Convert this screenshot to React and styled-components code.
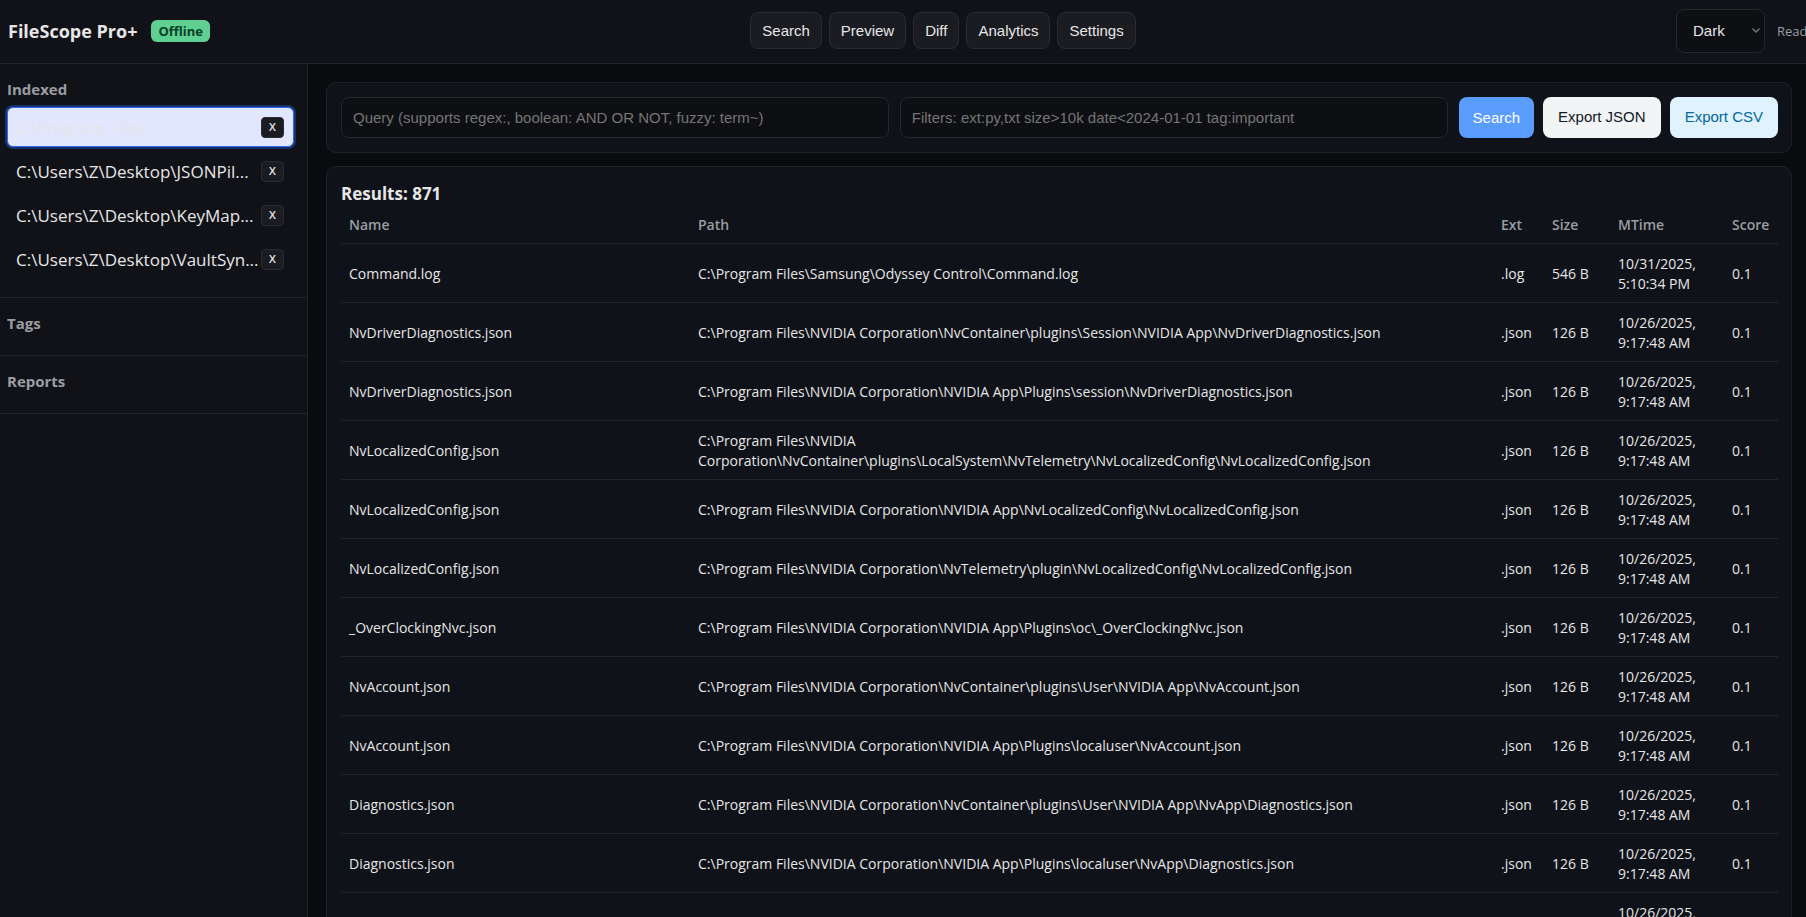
import React from "react";
import styled, { createGlobalStyle } from "styled-components";

const uiFont = `"Segoe UI", "Open Sans", "Noto Sans", sans-serif`;
const controlFont = `Arial, "Liberation Sans", sans-serif`;

const GlobalStyle = createGlobalStyle`
  *, *::before, *::after { box-sizing: border-box; }
  html, body, #root { height: 100%; }
  body {
    margin: 0;
    overflow: hidden;
    background: #0a0b0e;
    color: #e6e6e6;
    font-family: ${uiFont};
    font-size: 16px;
  }
`;

const Shell = styled.div`
  display: flex;
  flex-direction: column;
  height: 100%;
`;

const TopBar = styled.header`
  display: flex;
  align-items: center;
  justify-content: space-between;
  height: 64px;
  flex: none;
  padding: 0 8px 2px;
  background: #111217;
  border-bottom: 1px solid #222326;
`;

const Brand = styled.div`
  display: flex;
  align-items: center;
  gap: 14px;
  white-space: nowrap;
`;

const BrandName = styled.h1`
  margin: 0;
  font-size: 18px;
  font-weight: 700;
  line-height: 24px;
`;

const StatusBadge = styled.span`
  padding: 2px 7px;
  border-radius: 6px;
  background: #5fd092;
  color: #064024;
  font-size: 13px;
  font-weight: 700;
  line-height: 18px;
`;

const Tabs = styled.nav`
  display: flex;
  gap: 7px;
`;

const TabButton = styled.button`
  height: 37px;
  padding: 0 11px;
  border: 1px solid #2a2b32;
  border-radius: 8px;
  background: #1b1c21;
  color: #e6e6e6;
  font-family: ${controlFont};
  font-size: 15px;
`;

const TopRight = styled.div`
  display: flex;
  align-items: center;
  gap: 12px;
  margin-right: -16px;
`;

const ThemePicker = styled.label`
  display: grid;
  align-items: center;

  & > * { grid-area: 1 / 1; }
`;

const ThemeSelect = styled.select`
  appearance: none;
  width: 89px;
  height: 44px;
  padding: 0 16px;
  border: 1px solid #26272e;
  border-radius: 8px;
  background: #0e0f13;
  color: #e6e6e6;
  font-family: ${controlFont};
  font-size: 15px;
`;

const Chevron = styled.svg`
  justify-self: end;
  width: 8px;
  height: 5px;
  margin-right: 5px;
  pointer-events: none;
`;

const StatusText = styled.span`
  color: #9a9da1;
  font-size: 13px;
`;

const Body = styled.div`
  display: flex;
  flex: 1;
  min-height: 0;
`;

const Sidebar = styled.aside`
  width: 308px;
  flex: none;
  background: #111217;
  border-right: 1px solid #222326;
`;

const SideSection = styled.section`
  padding: 15px 13px 14px 7px;
  border-bottom: 1px solid #222326;
`;

const SideTitle = styled.h2`
  margin: 0 0 8px;
  color: #9a9da1;
  font-size: 15px;
  font-weight: 700;
  line-height: 20px;
`;

const IndexList = styled.ul`
  display: flex;
  flex-direction: column;
  gap: 4px;
  margin: 0;
  padding: 0 0 4px;
  list-style: none;
`;

const IndexItem = styled.li`
  display: flex;
  align-items: center;
  justify-content: space-between;
  height: 40px;
  padding: 0 9px 0 8px;
  border: 1px solid ${(p) => (p.$active ? "#2f6bea" : "transparent")};
  border-radius: 6px;
  background: ${(p) => (p.$active ? "#e0e7ff" : "transparent")};
  box-shadow: ${(p) => (p.$active ? "0 0 0 2px #17326b" : "none")};
`;

const IndexPath = styled.span`
  font-size: 17px;
  white-space: nowrap;
`;

const RemoveButton = styled.button`
  width: 23px;
  height: 21px;
  padding: 0;
  flex: none;
  border: 1px solid #2a2b32;
  border-radius: 4px;
  background: #1b1c21;
  color: #e6e6e6;
  font-family: ${uiFont};
  font-size: 11px;
  font-weight: 600;
  line-height: 18px;
`;

const Main = styled.main`
  display: flex;
  flex: 1;
  flex-direction: column;
  gap: 13px;
  min-width: 0;
  padding: 18px 14px 0 18px;
`;

const Card = styled.section`
  flex: none;
  padding: 14px 13px 14px 14px;
  border: 1px solid #202125;
  border-radius: 10px;
  background: #0f1218;
`;

const SearchForm = styled.form`
  display: flex;
  gap: 11px;
`;

const TextField = styled.input`
  flex: 1;
  min-width: 0;
  height: 41px;
  padding: 0 11px;
  border: 1px solid #26272e;
  border-radius: 8px;
  background: #0e0f13;
  color: #e6e6e6;
  font-family: ${controlFont};
  font-size: 15px;

  &::placeholder { color: #757575; }
`;

const Actions = styled.div`
  display: flex;
  gap: 9px;
`;

const ActionButton = styled.button`
  height: 41px;
  padding: ${(p) => (p.$primary ? "0 14px" : "0 15px 2px")};
  border: 0;
  border-radius: 8px;
  background: ${(p) => p.$bg};
  color: ${(p) => p.$fg};
  font-family: ${controlFont};
  font-size: 15px;
`;

const ResultsTitle = styled.h2`
  margin: 0;
  font-size: 17px;
  font-weight: 700;
  line-height: 26px;
`;

const ResultsTable = styled.table`
  width: 100%;
  table-layout: fixed;
  border-collapse: collapse;
  font-size: 14px;
  line-height: 20px;
`;

const Col = styled.col`
  width: ${(p) => p.$width};
`;

const Th = styled.th`
  padding: 8px;
  border-bottom: 1px solid #222326;
  color: #9a9da1;
  font-weight: 600;
  text-align: left;
`;

const Td = styled.td`
  height: 59px;
  padding: 10px 8px 8px;
  border-bottom: 1px solid #222326;
  vertical-align: middle;
`;

const indexed = [
  "C:\\Program Files",
  "C:\\Users\\Z\\Desktop\\JSONPil...",
  "C:\\Users\\Z\\Desktop\\KeyMap...",
  "C:\\Users\\Z\\Desktop\\VaultSyn...",
];

const nv = "C:\\Program Files\\NVIDIA Corporation\\";
const stamp = "10/26/2025, 9:17:48 AM";
const results = [
  ["Command.log", "C:\\Program Files\\Samsung\\Odyssey Control\\Command.log", ".log", "546 B", "10/31/2025, 5:10:34 PM"],
  ["NvDriverDiagnostics.json", nv + "NvContainer\\plugins\\Session\\NVIDIA App\\NvDriverDiagnostics.json", ".json", "126 B", stamp],
  ["NvDriverDiagnostics.json", nv + "NVIDIA App\\Plugins\\session\\NvDriverDiagnostics.json", ".json", "126 B", stamp],
  ["NvLocalizedConfig.json", nv + "NvContainer\\plugins\\LocalSystem\\NvTelemetry\\NvLocalizedConfig\\NvLocalizedConfig.json", ".json", "126 B", stamp],
  ["NvLocalizedConfig.json", nv + "NVIDIA App\\NvLocalizedConfig\\NvLocalizedConfig.json", ".json", "126 B", stamp],
  ["NvLocalizedConfig.json", nv + "NvTelemetry\\plugin\\NvLocalizedConfig\\NvLocalizedConfig.json", ".json", "126 B", stamp],
  ["_OverClockingNvc.json", nv + "NVIDIA App\\Plugins\\oc\\_OverClockingNvc.json", ".json", "126 B", stamp],
  ["NvAccount.json", nv + "NvContainer\\plugins\\User\\NVIDIA App\\NvAccount.json", ".json", "126 B", stamp],
  ["NvAccount.json", nv + "NVIDIA App\\Plugins\\localuser\\NvAccount.json", ".json", "126 B", stamp],
  ["Diagnostics.json", nv + "NvContainer\\plugins\\User\\NVIDIA App\\NvApp\\Diagnostics.json", ".json", "126 B", stamp],
  ["Diagnostics.json", nv + "NVIDIA App\\Plugins\\localuser\\NvApp\\Diagnostics.json", ".json", "126 B", stamp],
  ["Downloader.json", nv + "NvContainer\\plugins\\User\\NVIDIA App\\NvApp\\Downloader.json", ".json", "257 B", stamp],
];

export default function App() {
  return (
    <Shell>
      <GlobalStyle />
      <TopBar>
        <Brand>
          <BrandName>FileScope Pro+</BrandName>
          <StatusBadge>Offline</StatusBadge>
        </Brand>
        <Tabs>
          {["Search", "Preview", "Diff", "Analytics", "Settings"].map((t) => (
            <TabButton key={t} type="button">{t}</TabButton>
          ))}
        </Tabs>
        <TopRight>
          <ThemePicker>
            <ThemeSelect aria-label="Theme" defaultValue="Dark">
              <option>Dark</option>
              <option>Light</option>
            </ThemeSelect>
            <Chevron viewBox="0 0 8 5" aria-hidden="true">
              <path d="M0.5 0.5 L4 4 L7.5 0.5" fill="none" stroke="#777" strokeWidth="1.4" />
            </Chevron>
          </ThemePicker>
          <StatusText>Ready</StatusText>
        </TopRight>
      </TopBar>
      <Body>
        <Sidebar>
          <SideSection>
            <SideTitle>Indexed</SideTitle>
            <IndexList>
              {indexed.map((path, i) => (
                <IndexItem key={path} $active={i === 0}>
                  <IndexPath>{path}</IndexPath>
                  <RemoveButton type="button" aria-label={`Remove ${path}`}>X</RemoveButton>
                </IndexItem>
              ))}
            </IndexList>
          </SideSection>
          <SideSection><SideTitle>Tags</SideTitle></SideSection>
          <SideSection><SideTitle>Reports</SideTitle></SideSection>
        </Sidebar>
        <Main>
          <Card>
            <SearchForm onSubmit={(e) => e.preventDefault()}>
              <TextField aria-label="Query" placeholder="Query (supports regex:, boolean: AND OR NOT, fuzzy: term~)" />
              <TextField aria-label="Filters" placeholder="Filters: ext:py,txt size>10k date<2024-01-01 tag:important" />
              <Actions>
                <ActionButton type="submit" $primary $bg="#5b9cff" $fg="#ffffff">Search</ActionButton>
                <ActionButton type="button" $bg="#f3f4f6" $fg="#111827">Export JSON</ActionButton>
                <ActionButton type="button" $bg="#e0f2fe" $fg="#0369a1">Export CSV</ActionButton>
              </Actions>
            </SearchForm>
          </Card>
          <Card>
            <ResultsTitle>Results: 871</ResultsTitle>
            <ResultsTable>
              <colgroup>
                <Col $width="349px" />
                <Col />
                <Col $width="51px" />
                <Col $width="66px" />
                <Col $width="114px" />
                <Col $width="54px" />
              </colgroup>
              <thead>
                <tr>
                  {["Name", "Path", "Ext", "Size", "MTime", "Score"].map((h) => (
                    <Th key={h} scope="col">{h}</Th>
                  ))}
                </tr>
              </thead>
              <tbody>
                {results.map((r) => (
                  <tr key={r[1]}>
                    {r.map((cell, i) => <Td key={i}>{cell}</Td>)}
                    <Td>0.1</Td>
                  </tr>
                ))}
              </tbody>
            </ResultsTable>
          </Card>
        </Main>
      </Body>
    </Shell>
  );
}
